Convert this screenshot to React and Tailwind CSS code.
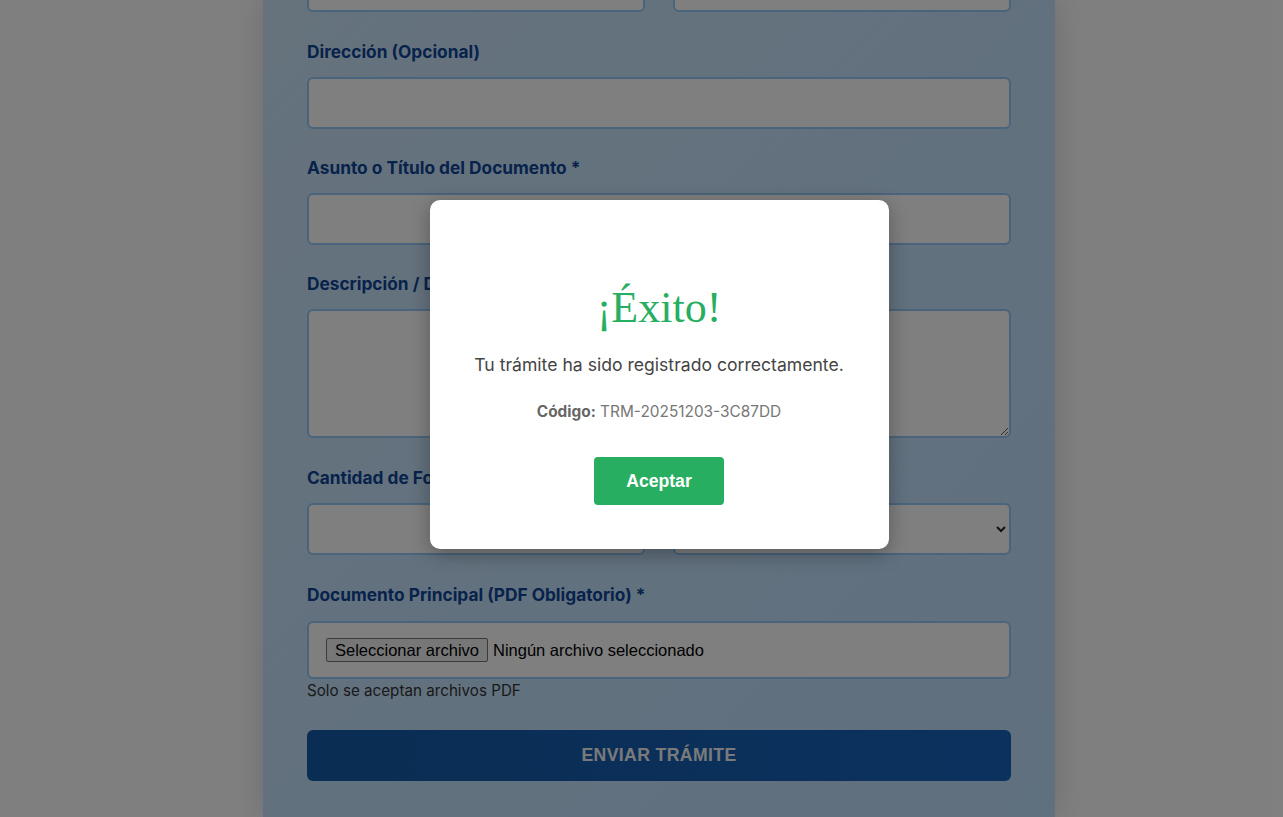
import { useState } from 'react';

const inputCls =
  'block w-full h-[52px] bg-white border-2 border-[#92c8f6] rounded-[6px] px-3 text-[16px] text-[#222] outline-none';

function Field({ label, children, className = '' }) {
  return (
    <div className={className}>
      <label className="block text-[17.3px] leading-[24px] font-bold text-[#0f4596] mb-[13px]">{label}</label>
      {children}
    </div>
  );
}

export default function App() {
  const [open, setOpen] = useState(true);

  return (
    <div className="relative h-[817px] overflow-hidden bg-white font-['Inter',sans-serif]">
      {/* Formulario de trámite (la página ya está desplazada hacia abajo) */}
      <div className="ml-[263px] w-[792px] h-full overflow-hidden bg-gradient-to-br from-[#cce6fa] to-[#bfe0ff] shadow-[0_0_30px_rgba(0,0,0,0.15)] px-[44px]">
        <div className="-mt-[40px]">
          <div className="grid grid-cols-2 gap-[28px] mb-[28px]">
            <input aria-label="Teléfono" className={inputCls} />
            <input aria-label="Correo Electrónico" className={inputCls} />
          </div>

          <Field label="Dirección (Opcional)" className="mb-[27px]">
            <input className={inputCls} />
          </Field>

          <Field label="Asunto o Título del Documento *" className="mb-[27px]">
            <input className={inputCls} />
          </Field>

          <Field label="Descripción / Detalle del Trámite" className="mb-[28px]">
            <textarea className="block w-full h-[129px] bg-white border-2 border-[#92c8f6] rounded-[6px] px-3 py-2 text-[16px] outline-none" />
          </Field>

          <div className="grid grid-cols-2 gap-[28px] mb-[28px]">
            <Field label="Cantidad de Folios *">
              <input type="number" className={inputCls} />
            </Field>
            <Field label="Tipo *">
              <select className={inputCls + ' pr-2'} defaultValue="">
                <option value=""></option>
                <option>Solicitud</option>
                <option>Oficio</option>
              </select>
            </Field>
          </div>

          <div>
            <label className="block text-[17.3px] leading-[24px] font-bold text-[#0f4596] mb-[14px]">
              Documento Principal (PDF Obligatorio) *
            </label>
            <div className="flex items-center h-[58px] bg-white border-2 border-[#92c8f6] rounded-[6px] px-[17px] font-['Liberation_Sans',Arial,sans-serif] text-[16.5px] text-black">
              <span className="h-[24px] flex items-center px-[8px] bg-[#efefef] border border-[#767676] rounded-[2px]">
                Seleccionar archivo
              </span>
              <span className="ml-[5px]">Ningún archivo seleccionado</span>
            </div>
            <p className="mt-[2px] text-[15.2px] leading-[20px] text-[#333]">Solo se aceptan archivos PDF</p>
          </div>

          <button className="mt-[29px] w-full h-[51px] rounded-[6px] bg-gradient-to-r from-[#155aa6] to-[#1664be] text-[#f4f4f4] font-bold text-[17.6px] tracking-[0.4px] font-['Liberation_Sans',Arial,sans-serif]">
            ENVIAR TRÁMITE
          </button>
        </div>
      </div>

      {/* Modal de éxito */}
      {open && (
        <div className="absolute inset-0 bg-black/50 flex justify-center items-start pt-[200px] pl-[35px]">
          <div className="w-[459px] bg-white rounded-[10px] shadow-[0_5px_20px_rgba(0,0,0,0.3)] text-center pt-[83px] pb-[44px]">
            <h2 className="font-['Liberation_Serif',serif] text-[44px] leading-[49px] text-[#27ae60]">¡Éxito!</h2>
            <p className="mt-[20px] text-[17.6px] leading-[26px] text-[#444]">
              Tu trámite ha sido registrado correctamente.
            </p>
            <p className="mt-[23px] text-[15.4px] leading-[22px] text-[#777]">
              <strong className="text-[#666]">Código:</strong> TRM-20251203-3C87DD
            </p>
            <button
              onClick={() => setOpen(false)}
              className="mt-[34px] h-[48px] px-[32px] rounded-[4px] bg-[#27ae60] text-white font-bold text-[17.6px] font-['Liberation_Sans',Arial,sans-serif]"
            >
              Aceptar
            </button>
          </div>
        </div>
      )}
    </div>
  );
}
